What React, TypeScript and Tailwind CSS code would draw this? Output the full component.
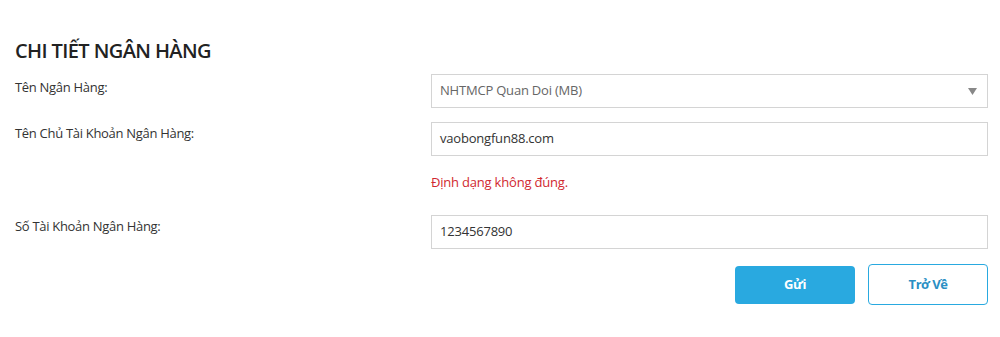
export default function App() {
  return (
    <div className="w-[1000px] h-[337px] bg-white font-['Open_Sans',sans-serif] text-[#333]">
      <div className="pl-[15px] pr-[12px] pt-[38px]">
        <h2 className="text-[20px] leading-[26px] font-semibold tracking-[-0.6px] text-[#222]">CHI TIẾT NGÂN HÀNG</h2>

        <div className="mt-[10px] flex">
          <label className="w-[416px] pt-[4px] text-[13px] leading-[18px] tracking-[-0.3px]">Tên Ngân Hàng:</label>
          <div className="flex-1 h-[34px] border border-[#d4d4d4] flex items-center justify-between px-[8px] text-[13px] text-[#666] tracking-[-0.2px]">
            <span>NHTMCP Quan Doi (MB)</span>
            <svg width="9" height="7" viewBox="0 0 9 7" className="mr-[2px]">
              <path d="M0 0 H9 L4.5 7 Z" fill="#888" />
            </svg>
          </div>
        </div>

        <div className="mt-[14px] flex">
          <label className="w-[416px] pt-[2px] text-[13px] leading-[18px] tracking-[-0.3px]">Tên Chủ Tài Khoản Ngân Hàng:</label>
          <div className="flex-1">
            <div className="h-[34px] border border-[#d4d4d4] flex items-center px-[8px] text-[13px] tracking-[-0.2px]">vaobongfun88.com</div>
            <p className="mt-[17px] text-[13px] leading-[18px] text-[#d1282f] tracking-[-0.2px]">Định dạng không đúng.</p>
          </div>
        </div>

        <div className="mt-[24px] flex">
          <label className="w-[416px] pt-[2px] text-[13px] leading-[18px] tracking-[-0.3px]">Số Tài Khoản Ngân Hàng:</label>
          <div className="flex-1 h-[34px] border border-[#d4d4d4] flex items-center px-[8px] text-[13px] tracking-[-0.2px]">1234567890</div>
        </div>

        <div className="mt-[15px] flex justify-end items-center gap-[13px]">
          <button className="w-[120px] h-[38px] rounded-[4px] bg-[#29a9e0] text-white text-[13px] font-bold tracking-[-0.5px]">Gửi</button>
          <button className="w-[120px] h-[41px] rounded-[4px] border border-[#29a9e0] bg-white text-[#2a8fc4] text-[13px] font-bold tracking-[-0.5px]">Trở Về</button>
        </div>
      </div>
    </div>
  );
}
